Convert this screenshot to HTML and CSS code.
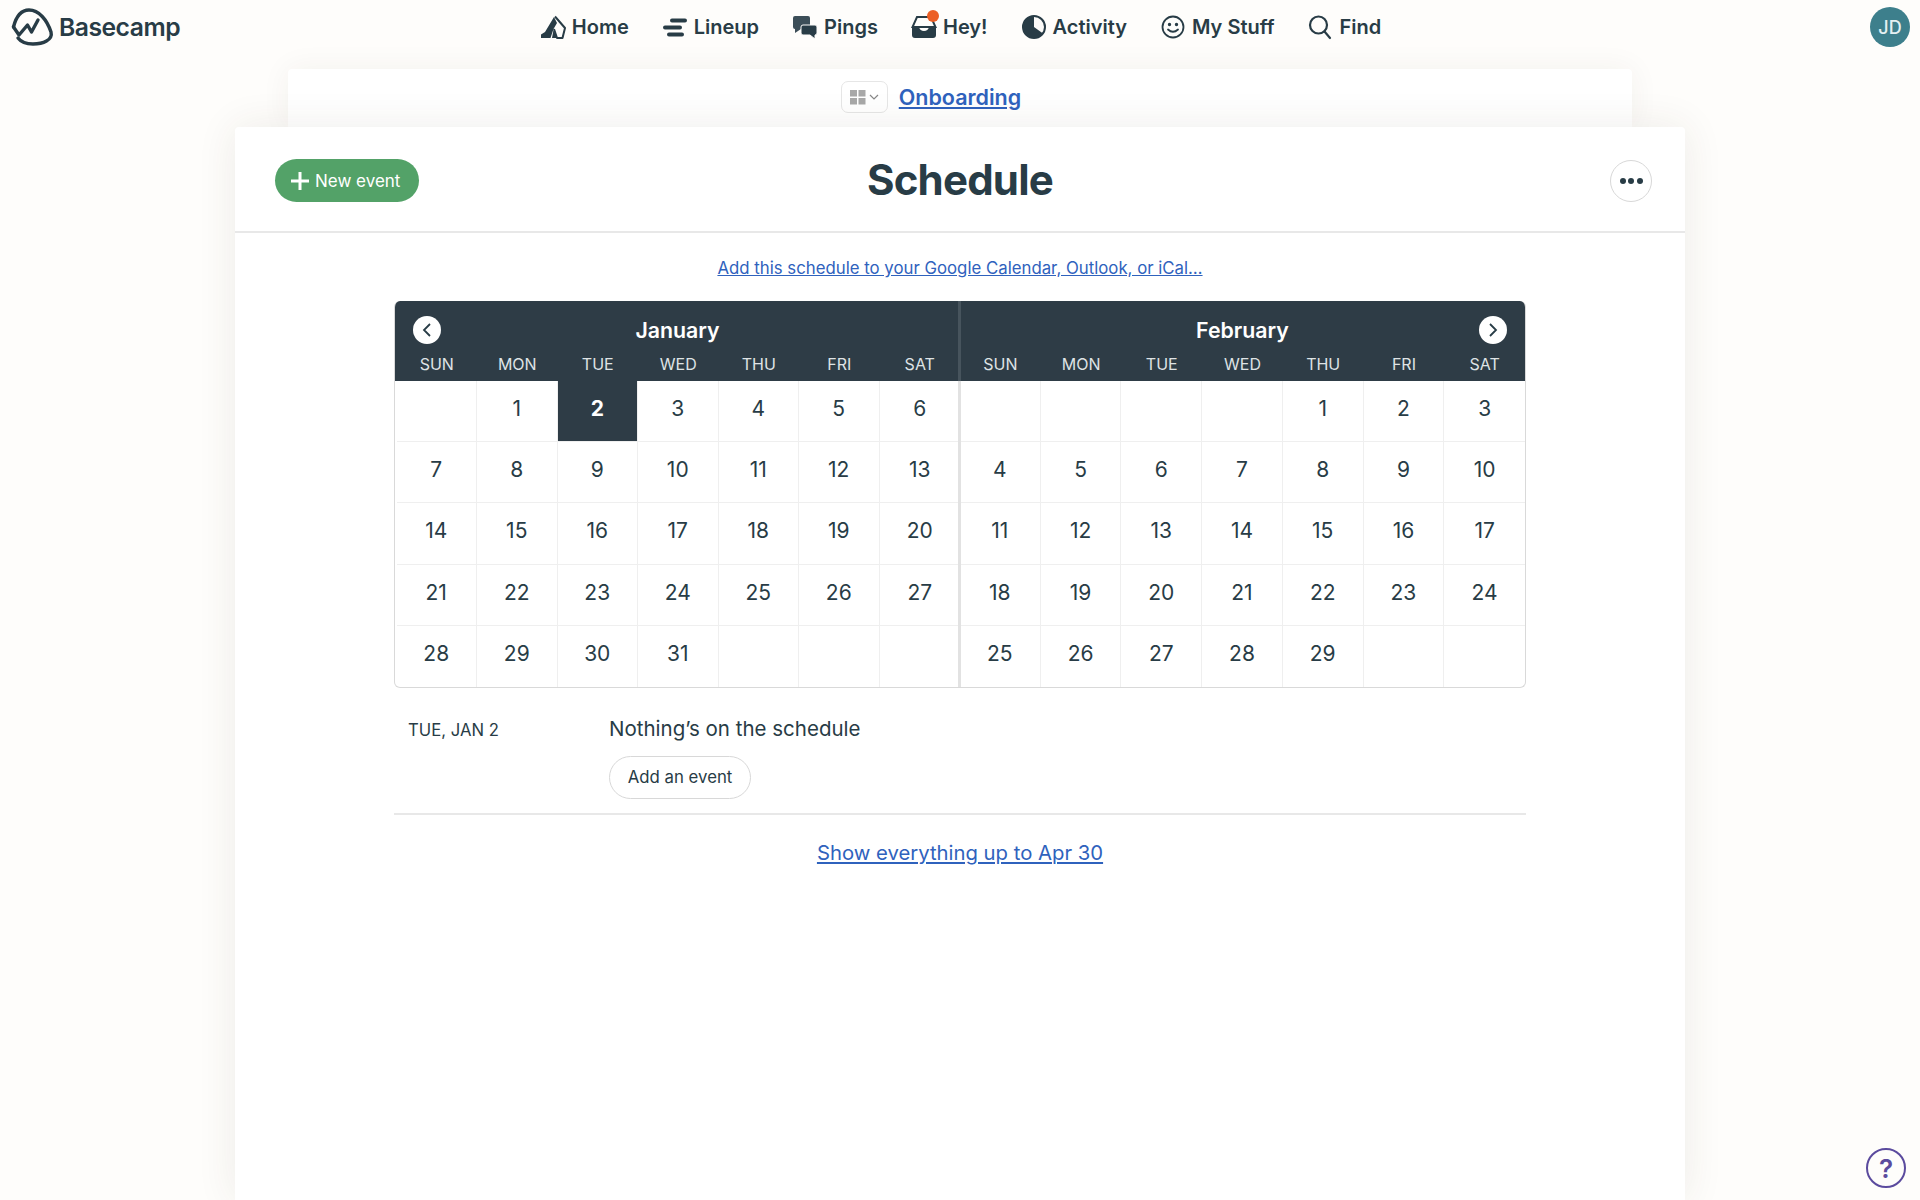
FILE: index.html
```html
<!DOCTYPE html>
<html lang="en">

<head>
    <meta charset="UTF-8">
    <meta name="viewport" content="width=device-width, initial-scale=1.0">
    <title>Schedule</title>
    <link rel="stylesheet" href="styles.css">
</head>

<body>
    <!-- Top navigation -->
    <header class="topbar">
        <a class="logo" href="#">
            <svg class="logoMark" viewBox="0 0 44 38" width="44" height="38" fill="none" stroke="#283c46" stroke-width="3.4" stroke-linecap="round" stroke-linejoin="round">
                <path d="M2.5 19 C5 9 10 2 18 2 C28 2 36 12 40 24 C42 32 32 36 22 36 C16 36 10 34 7 30"/>
                <path d="M2.5 19 L8 27 L16.5 17 L20.5 24 L27 12"/>
            </svg>
            <span>Basecamp</span>
        </a>
        <nav class="mainNav">
            <a href="#"><svg viewBox="0 0 26 26" width="26" height="26"><path fill="#283c46" d="M14 3 L17 9 L13.500 15 L10.500 24 L1 24 L1 20.500 L5 18 Z"/><path fill="#283c46" d="M13.500 16 L17 24 L12 24 Z"/><path fill="none" stroke="#283c46" stroke-width="2" stroke-linejoin="round" d="M15 2.500 L25 14 L22.500 24 L17 24 L14 15"/></svg>Home</a>
            <a href="#"><svg viewBox="0 0 26 26" width="26" height="26"><g stroke="#283c46" stroke-width="4" stroke-linecap="round"><path d="M10 6.500 H23"/><path d="M3 13.500 H18"/><path d="M7 20.500 H20"/></g></svg>Lineup</a>
            <a href="#"><svg viewBox="0 0 26 26" width="26" height="26"><path fill="#3c4e58" d="M3 2 H16 Q18 2 18 4 V13 Q18 15 16 15 H9 L3 19 V15 Q1 15 1 13 V4 Q1 2 3 2 Z"/><path fill="#283c46" stroke="#fbfaf8" d="M11 11 H23 Q25 11 25 13 V19 Q25 21 23 21 V25 L18 21 H11 Q9 21 9 19 V13 Q9 11 11 11 Z"/></svg>Pings</a>
            <a href="#"><svg viewBox="0 0 26 26" width="26" height="26"><path fill="none" stroke="#283c46" stroke-width="2" d="M6 3 H20 L24.500 13 H1.500 Z"/><path fill="#283c46" d="M1 13 H8 Q9 17 13 17 Q17 17 18 13 H25 V21 Q25 24 22 24 H4 Q1 24 1 21 Z"/></svg><span class="badge"></span>Hey!</a>
            <a href="#"><svg viewBox="0 0 26 26" width="26" height="26"><circle cx="13" cy="13" r="11" fill="#fbfaf8" stroke="#283c46" stroke-width="2"/><path fill="#283c46" d="M13 2 A11 11 0 1 0 22 19.500 L13 13 Z"/></svg>Activity</a>
            <a href="#"><svg viewBox="0 0 26 26" width="26" height="26" fill="none" stroke="#283c46" stroke-width="1.800" stroke-linecap="round"><circle cx="13" cy="13" r="10.500"/><path d="M8 15.500 Q13 20 18 15.500"/><circle cx="9.500" cy="10.500" r="0.800" fill="#283c46"/><circle cx="16.500" cy="10.500" r="0.800" fill="#283c46"/></svg>My Stuff</a>
            <a href="#"><svg viewBox="0 0 26 26" width="26" height="26" fill="none" stroke="#283c46" stroke-width="2.200" stroke-linecap="round"><circle cx="11.500" cy="11" r="8.500"/><path d="M17.500 17.500 L23 24"/></svg>Find</a>
        </nav>
        <div class="avatar">JD</div>
    </header>

    <main class="pageWrap">
        <!-- Project tab behind the card -->
        <div class="projectTab">
            <button class="switcher">
                <svg viewBox="0 0 16 16" width="16" height="16" fill="#a8a8a8"><rect x="0" y="1" width="7" height="6.500"/><rect x="8.500" y="1" width="7" height="6.500"/><rect x="0" y="9" width="7" height="6.500"/><rect x="8.500" y="9" width="7" height="6.500"/></svg>
                <svg viewBox="0 0 10 10" width="10" height="10" fill="none" stroke="#888" stroke-width="1.200"><path d="M1 3 L5 7 L9 3"/></svg>
            </button>
            <a class="projectLink" href="#">Onboarding</a>
        </div>

        <section class="card">
            <div class="cardHead">
                <a class="newEvent" href="#"><svg viewBox="0 0 18 18" width="18" height="18" stroke="#fff" stroke-width="3"><path d="M9 0 V18 M0 9 H18"/></svg>New event</a>
                <h1>Schedule</h1>
                <button class="moreBtn"><span></span><span></span><span></span></button>
            </div>

            <div class="cardBody">
                <a class="subscribeLink" href="#">Add this schedule to your Google Calendar, Outlook, or iCal…</a>

                <div class="calendar">
                    <div class="month" id="janMonth">
                        <div class="monthHead">
                            <button class="arrow arrowPrev"><svg viewBox="0 0 12 16" width="12" height="16" fill="none" stroke="#283c46" stroke-width="1.800"><path d="M9 2 L3 8 L9 14"/></svg></button>
                            <h2>January</h2>
                            <div class="weekdays"></div>
                        </div>
                        <div class="days"></div>
                    </div>
                    <div class="month" id="febMonth">
                        <div class="monthHead">
                            <button class="arrow arrowNext"><svg viewBox="0 0 12 16" width="12" height="16" fill="none" stroke="#283c46" stroke-width="1.800"><path d="M3 2 L9 8 L3 14"/></svg></button>
                            <h2>February</h2>
                            <div class="weekdays"></div>
                        </div>
                        <div class="days"></div>
                    </div>
                </div>

                <div class="agenda">
                    <div class="agendaDate">Tue, Jan 2</div>
                    <div class="agendaMain">
                        <p>Nothing’s on the schedule</p>
                        <a class="addEvent" href="#">Add an event</a>
                    </div>
                </div>

                <a class="showAll" href="#">Show everything up to Apr 30</a>
            </div>
        </section>
    </main>

    <a class="helpBtn" href="#">?</a>

    <script src="calendar.js"></script>
</body>

</html>
```

FILE: styles.css
```css
* {
    box-sizing: border-box;
}

body {
    margin: 0;
    height: 1200px;
    overflow: hidden;
    background-color: #fefdfb;
    color: #283c46;
    font-family: Inter, "Liberation Sans", sans-serif;
}

a {
    color: inherit;
    text-decoration: none;
}

button {
    padding: 0;
    border: none;
    background: none;
    font: inherit;
}

/* Top bar */
.topbar {
    display: grid;
    grid-template-columns: 1fr auto 1fr;
    align-items: center;
    height: 54px;
    padding: 0 10px 0 11px;
}

.logo {
    display: flex;
    align-items: center;
    gap: 4px;
    justify-self: start;
    font-size: 24.7px;
    font-weight: 600;
    letter-spacing: -0.5px;
}

.mainNav {
    display: flex;
    align-items: center;
    gap: 33px;
    font-size: 20px;
    font-weight: 600;
}

.mainNav a {
    display: flex;
    align-items: center;
    gap: 6px;
    position: relative;
}

.badge {
    position: absolute;
    top: -4px;
    left: 16px;
    width: 12px;
    height: 12px;
    border-radius: 50%;
    background-color: #ec5f25;
}

.avatar {
    display: flex;
    align-items: center;
    justify-content: center;
    justify-self: end;
    width: 40px;
    height: 40px;
    border-radius: 50%;
    background-color: #3d7f8c;
    color: #e4f0f2;
    font-size: 18px;
    font-weight: 500;
}

/* Cards */
.pageWrap {
    width: 1450px;
    margin: 0 auto;
}

.projectTab {
    display: grid;
    grid-template-columns: 1fr auto 1fr;
    align-items: center;
    column-gap: 11px;
    width: 1344px;
    height: 58px;
    margin: 15px auto 0;
    padding-bottom: 2px;
    border-radius: 4px 4px 0 0;
    background-color: #fff;
    box-shadow: 0 0 30px rgba(70, 50, 30, 0.06);
}

.switcher {
    display: flex;
    align-items: center;
    justify-content: center;
    gap: 3px;
    justify-self: end;
    width: 47px;
    height: 32px;
    border: 1px solid #e6e6e6;
    border-radius: 7px;
}

.projectLink {
    color: #2f62bd;
    font-size: 21.5px;
    font-weight: 600;
    text-decoration: underline;
}

.card {
    position: relative;
    height: 1073px;
    border-radius: 4px 4px 0 0;
    background-color: #fff;
    box-shadow: 0 0 40px rgba(70, 50, 30, 0.09);
}

.cardHead {
    position: relative;
    display: flex;
    align-items: center;
    justify-content: center;
    height: 106px;
    border-bottom: 2px solid #e8e8e8;
}

.cardHead h1 {
    margin: 0;
    font-size: 42px;
    font-weight: 700;
    letter-spacing: -0.8px;
}

.newEvent {
    position: absolute;
    top: 32px;
    left: 40px;
    display: flex;
    align-items: center;
    gap: 6px;
    width: 144px;
    height: 43px;
    padding-left: 16px;
    border-radius: 22px;
    background-color: #53a268;
    color: #fff;
    font-size: 17px;
}

.moreBtn {
    position: absolute;
    top: 33px;
    right: 33px;
    display: flex;
    align-items: center;
    justify-content: center;
    gap: 2.5px;
    width: 42px;
    height: 42px;
    border: 1px solid #d8d8d8;
    border-radius: 50%;
}

.moreBtn span {
    width: 6px;
    height: 6px;
    border-radius: 50%;
    background-color: #283c46;
}

.cardBody {
    display: flex;
    flex-direction: column;
    align-items: center;
    padding: 24px 150px 0;
}

.subscribeLink {
    margin-bottom: 22px;
    color: #2f62bd;
    font-size: 16.8px;
    line-height: 22px;
    text-decoration: underline;
}

/* Calendar */
.calendar {
    display: flex;
    width: 1132px;
    border-radius: 6px;
    overflow: hidden;
    border: 1px solid #d9d9d9;
    border-top: none;
}

.month {
    flex: 1;
    position: relative;
}

/* Divider between the months, laid over the edge of the cells */
.month + .month::before {
    content: "";
    position: absolute;
    top: 0;
    bottom: 0;
    left: -2px;
    z-index: 1;
    width: 3px;
    background: linear-gradient(#47545d 80px, #e2e2e2 80px);
}

.monthHead {
    position: relative;
    height: 80px;
    padding-top: 15px;
    background-color: #2e3c46;
    color: #fff;
    text-align: center;
}

.monthHead h2 {
    margin: 0;
    font-size: 21.3px;
    font-weight: 600;
    line-height: 28px;
}

.arrow {
    position: absolute;
    top: 15px;
    display: flex;
    align-items: center;
    justify-content: center;
    width: 28px;
    height: 28px;
    border-radius: 50%;
    background-color: #fff;
}

.arrowPrev {
    left: 18px;
}

.arrowNext {
    right: 18px;
}

.weekdays {
    display: grid;
    grid-template-columns: repeat(7, 1fr);
    margin-top: 10px;
    color: #dfe3e5;
    font-size: 16px;
    line-height: 20px;
}

.days {
    display: grid;
    grid-template-columns: repeat(7, 1fr);
    grid-auto-rows: 61.2px;
}

#janMonth .weekdays,
#janMonth .days {
    padding-left: 1.5px;
}

.day {
    display: flex;
    justify-content: center;
    padding-top: 15px;
    border-right: 1px solid #efefef;
    border-bottom: 1px solid #efefef;
    font-size: 21px;
    line-height: 25px;
}

.day:nth-child(7n) {
    border-right: none;
}

.day:nth-last-child(-n+7) {
    border-bottom: none;
}

.dayToday {
    background-color: #2e3c46;
    background-clip: padding-box;
    color: #fff;
    font-weight: 700;
}

/* Agenda */
.agenda {
    display: flex;
    width: 1132px;
    height: 127px;
    padding: 27px 0 0 14px;
    border-bottom: 2px solid #e8e8e8;
}

.agendaDate {
    width: 201px;
    padding-top: 4px;
    font-size: 16.7px;
    line-height: 22px;
    text-transform: uppercase;
}

.agendaMain p {
    margin: 0 0 14px;
    font-size: 20.5px;
    line-height: 27px;
}

.addEvent {
    display: flex;
    align-items: center;
    justify-content: center;
    width: 142px;
    height: 43px;
    border: 1px solid #d8d8d8;
    border-radius: 22px;
    font-size: 16.8px;
}

.showAll {
    margin-top: 25px;
    color: #2f62bd;
    font-size: 20.3px;
    line-height: 26px;
    text-decoration: underline;
}

.helpBtn {
    position: absolute;
    right: 14px;
    bottom: 12px;
    display: flex;
    align-items: center;
    justify-content: center;
    width: 40px;
    height: 40px;
    border: 2px solid #5b4b9e;
    border-radius: 50%;
    color: #5b4b9e;
    font-size: 26px;
    font-weight: 600;
}
```

FILE: calendar.js
```js
document.addEventListener("DOMContentLoaded", function () {
    const names = ["Sun", "Mon", "Tue", "Wed", "Thu", "Fri", "Sat"];

    // Fill one month: blanks first, then the numbers, then blanks to the end of the row
    function buildMonth(id, firstDay, count, today) {
        const month = document.getElementById(id);
        const weekdays = month.querySelector(".weekdays");
        const days = month.querySelector(".days");

        names.forEach(function (name) {
            const cell = document.createElement("div");
            cell.textContent = name.toUpperCase();
            weekdays.appendChild(cell);
        });

        for (let i = 0; i < 35; i++) {
            const cell = document.createElement("div");
            const number = i - firstDay + 1;
            cell.className = "day";
            if (number >= 1 && number <= count) {
                cell.textContent = number;
                if (number === today) {
                    cell.className = "day dayToday";
                }
            }
            days.appendChild(cell);
        }
    }

    buildMonth("janMonth", 1, 31, 2);
    buildMonth("febMonth", 4, 29, null);
});
```
